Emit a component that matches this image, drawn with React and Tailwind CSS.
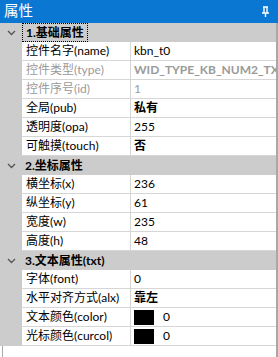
const FONT = "font-[family-name:Lato,'Noto_Sans_CJK_SC',sans-serif]";

const GROUPS = [
  {
    title: "1.基础属性",
    focused: true,
    rows: [
      { name: "控件名字(name)", value: "kbn_t0" },
      { name: "控件类型(type)", value: "WID_TYPE_KB_NUM2_TXT", disabled: true, bold: true },
      { name: "控件序号(id)", value: "1", disabled: true },
      { name: "全局(pub)", value: "私有", bold: true },
      { name: "透明度(opa)", value: "255" },
      { name: "可触摸(touch)", value: "否", bold: true },
    ],
  },
  {
    title: "2.坐标属性",
    rows: [
      { name: "横坐标(x)", value: "236" },
      { name: "纵坐标(y)", value: "61" },
      { name: "宽度(w)", value: "235" },
      { name: "高度(h)", value: "48" },
    ],
  },
  {
    title: "3.文本属性(txt)",
    rows: [
      { name: "字体(font)", value: "0" },
      { name: "水平对齐方式(alx)", value: "靠左", bold: true },
      { name: "文本颜色(color)", value: "0", swatch: true },
      { name: "光标颜色(curcol)", value: "0", swatch: true },
    ],
  },
];

function Chevron() {
  return (
    <svg width="9" height="6" viewBox="0 0 9 6" className="shrink-0">
      <path d="M1 1 L4.5 4.5 L8 1" fill="none" stroke="#555" strokeWidth="1.3" />
    </svg>
  );
}

function Pin() {
  return (
    <svg width="9" height="12" viewBox="0 0 9 12">
      <path d="M2 1 H7 M3 1 V7 M6 1 V7 M1 7 H8 M4.5 7 V11" stroke="#fff" strokeWidth="1.4" fill="none" />
    </svg>
  );
}

function Row({ row }) {
  const color = row.disabled ? "text-[#9a9a9a]" : "text-black";
  return (
    <div className="flex h-[19px]">
      <div className="w-[22px] shrink-0 bg-[#cccccc]" />
      <div className={`w-[109px] shrink-0 border-r border-b border-[#d6d6d6] pl-[4px] flex items-center whitespace-nowrap overflow-hidden ${color}`}>
        {row.name}
      </div>
      <div className={`flex-1 border-b border-[#d6d6d6] pl-[3px] flex items-center whitespace-nowrap overflow-hidden ${color} ${row.bold ? "font-bold" : ""}`}>
        {row.swatch ? (
          <>
            <span className="w-[20px] h-[15px] bg-black shrink-0" />
            <span className="ml-[9px]">{row.value}</span>
          </>
        ) : (
          row.value
        )}
      </div>
    </div>
  );
}

export default function App() {
  return (
    <div className={`w-[278px] h-[357px] bg-white overflow-hidden flex flex-col ${FONT} text-[12px] leading-none`}>
      {/* Title bar */}
      <div className="h-[23px] shrink-0 bg-[#0a78d2] flex items-center justify-between pl-[4px] pr-[8px]">
        <span className="text-white text-[14.5px]">属性</span>
        <Pin />
      </div>

      {/* Property grid */}
      <div className="flex-1 border-r-2 border-[#a8a8a8] flex flex-col">
        {GROUPS.map((group) => (
          <div key={group.title}>
            <div className="h-[19px] bg-[#cccccc] flex items-center">
              <div className="w-[22px] flex justify-center pl-[1px]">
                <Chevron />
              </div>
              <span
                className={`font-bold text-black h-full flex items-center px-[3px] ${
                  group.focused ? "border border-dotted border-black" : ""
                }`}
              >
                {group.title}
              </span>
            </div>
            {group.rows.map((row) => (
              <Row key={row.name} row={row} />
            ))}
          </div>
        ))}
        <div className="flex-1 ml-[2px] border-l border-[#a8a8a8]" />
      </div>
    </div>
  );
}
